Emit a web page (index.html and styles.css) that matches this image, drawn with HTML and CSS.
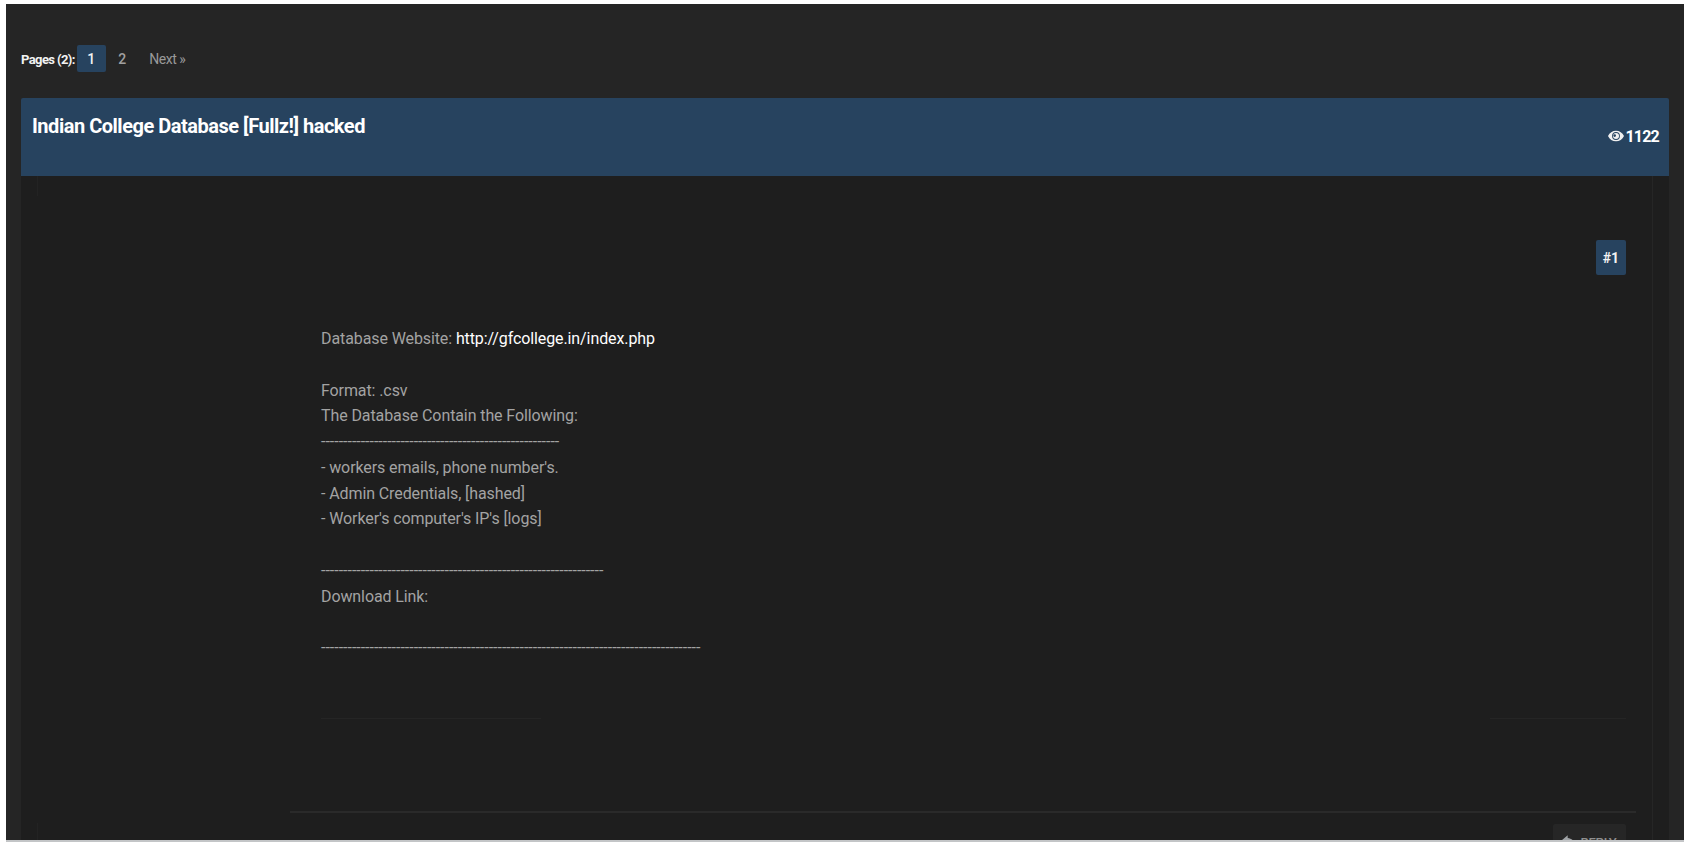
FILE: index.html
```html
<!DOCTYPE html>
<html lang="en">
<head>
<meta charset="utf-8">
<title>Indian College Database [Fullz!] hacked</title>
<link rel="stylesheet" href="styles.css">
</head>
<body>
<main class="frame">
  <nav class="pager">
    <span class="pager-label">Pages (2):</span>
    <span class="page current">1</span>
    <a class="page" href="#">2</a>
    <a class="page next" href="#">Next »</a>
  </nav>
  <header class="thread-head">
    <h1 class="thread-title">Indian College Database [Fullz!] hacked</h1>
    <div class="views">
      <svg class="eye" viewBox="0 0 18 12" aria-hidden="true"><path fill-rule="evenodd" d="M9 0C5 0 1.800 2.300 0 6c1.800 3.700 5 6 9 6s7.200-2.300 9-6C16.200 2.300 13 0 9 0zM9 1.600a4.400 4.400 0 1 1 0 8.800 4.400 4.400 0 0 1 0-8.800z"/><path fill-rule="evenodd" d="M9 2.600a3.400 3.400 0 1 1 0 6.800 3.400 3.400 0 0 1 0-6.800zM7.500 4a1.500 1.500 0 1 0 0 3 1.500 1.500 0 0 0 0-3z"/></svg>
      <span>1122</span>
    </div>
  </header>
  <article class="post">
    <div class="post-inner">
      <div class="post-top"><a class="post-num" href="#">#1</a></div>
      <div class="post-body">
        <p class="line">Database Website: <a class="link" href="#">http://gfcollege.in/index.php</a></p>
        <p class="line">&nbsp;</p>
        <p class="line">Format: .csv</p>
        <p class="line">The Database Contain the Following:</p>
        <p class="line dash">------------------------------------------------------</p>
        <p class="line">- workers emails, phone number's.</p>
        <p class="line">- Admin Credentials, [hashed]</p>
        <p class="line">- Worker's computer's IP's [logs]</p>
        <p class="line">&nbsp;</p>
        <p class="line dash">----------------------------------------------------------------</p>
        <p class="line">Download Link:</p>
        <p class="line">&nbsp;</p>
        <p class="line dash">--------------------------------------------------------------------------------------</p>
      </div>
      <div class="post-rules"><span class="rule-left"></span><span class="rule-right"></span></div>
      <footer class="post-foot">
        <a class="reply" href="#">
          <svg class="reply-icon" viewBox="0 0 16 12" aria-hidden="true"><path d="M6.500 0 0 5.500 6.500 11V7.500c4 0 6.500 1 8.500 4.500-.5-5-3.500-8.500-8.500-9z"/></svg>
          REPLY
        </a>
      </footer>
    </div>
  </article>
</main>
</body>
</html>
```

FILE: styles.css
```css
* { box-sizing: border-box; }

html, body { margin: 0; height: 100%; overflow: hidden; }

body {
  background: #ffffff;
  font-family: Roboto, "Liberation Sans", sans-serif;
  padding: 4px 5px 0 6px;
}

.frame {
  height: 838px;
  background: #252525;
  padding: 41px 15px 0;
  overflow: hidden;
  border-bottom: 2px solid #c3c5c7;
}

.pager {
  display: flex;
  align-items: center;
  gap: 2px;
  height: 27px;
  margin-bottom: 26px;
}

.pager-label {
  color: #f2f2f2;
  font-weight: 700;
  font-size: 13px;
  padding-top: 2px;
  letter-spacing: -0.6px;
}

.page {
  height: 27px;
  padding: 1px 10.5px 0;
  display: flex;
  align-items: center;
  color: #a0a0a0;
  font-size: 14px;
  font-weight: 500;
  text-decoration: none;
  border-radius: 2px;
}

.page.current {
  background: #27435f;
  color: #f2f2f2;
}

.page.next {
  font-weight: 400;
  letter-spacing: -0.5px;
  color: #999999;
}

.thread-head {
  height: 78px;
  background: #27435f;
  border-radius: 2px 2px 0 0;
  display: flex;
  justify-content: space-between;
  padding: 14px 10px 0 11px;
  color: #ffffff;
}

.thread-title {
  margin: 0;
  font-size: 20px;
  line-height: 28px;
  font-weight: 700;
  letter-spacing: -0.48px;
}

.views {
  display: flex;
  align-items: center;
  gap: 1.5px;
  height: 20px;
  margin-top: 14px;
  font-size: 16px;
  font-weight: 700;
  letter-spacing: -0.8px;
}

.eye { width: 16px; height: 12px; fill: #f0f0f0; }

.post {
  height: 700px;
  padding-right: 16px;
  background-color: #1e1e1e;
  background-image: linear-gradient(to bottom, #232323 20px, transparent 20px, transparent 647px, #232323 647px);
  background-size: 1px 100%;
  background-position: 16px 0;
  background-repeat: no-repeat;
}

.post-inner {
  height: 100%;
  border-right: 1px solid #262626;
  padding-left: 300px;
}

.post-top {
  display: flex;
  justify-content: flex-end;
  padding: 64px 26px 0 0;
  height: 150px;
}

.post-num {
  width: 30px;
  height: 35px;
  background: #27435f;
  color: #f2f2f2;
  font-size: 14px;
  font-weight: 700;
  display: flex;
  align-items: center;
  justify-content: center;
  text-decoration: none;
  border-radius: 2px;
}

.post-body {
  font-size: 16px;
  line-height: 25.75px;
  letter-spacing: -0.1px;
  color: #a3a3a3;
  height: 392px;
}

.line { margin: 0; }

.dash { letter-spacing: -0.01px; }

.link { color: #ffffff; text-decoration: none; }

.post-rules {
  display: flex;
  justify-content: space-between;
  padding-right: 26px;
}

.rule-left, .rule-right {
  height: 1px;
  background: #252525;
}

.rule-left { width: 220px; }
.rule-right { width: 136px; }

.post-foot {
  margin: 92px 16px 0 -31px;
  border-top: 2px solid #2a2a2a;
  display: flex;
  justify-content: flex-end;
  padding: 11px 10px 0 0;
}

.reply {
  width: 73px;
  height: 34px;
  background: #262626;
  color: #8f8f8f;
  font-size: 13px;
  font-weight: 500;
  letter-spacing: -0.2px;
  display: flex;
  justify-content: center;
  gap: 4px;
  padding-top: 11px;
  text-decoration: none;
  border-radius: 2px;
}

.reply-icon { width: 14px; height: 11px; fill: #9fa3a6; }
```
